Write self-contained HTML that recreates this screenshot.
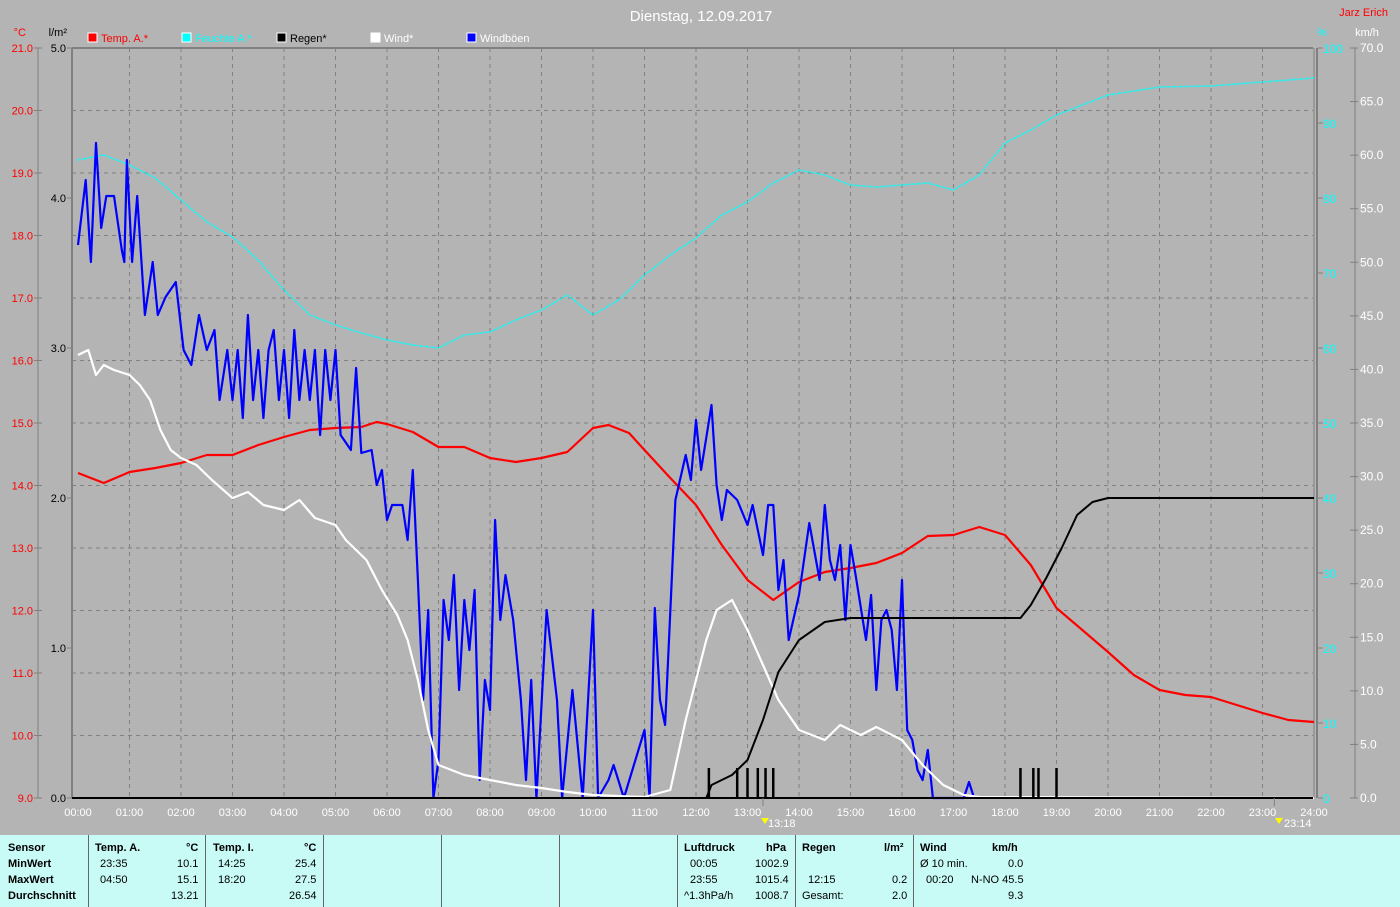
<!DOCTYPE html>
<html><head><meta charset="utf-8"><style>
html,body{margin:0;padding:0;background:#b4b4b4;}
body{width:1400px;height:907px;overflow:hidden;position:relative;font-family:"Liberation Sans",sans-serif;}
svg{position:absolute;left:0;top:0;}
.tb{position:absolute;left:0;top:835px;width:1400px;height:72px;background:#c8faf6;font-size:11px;color:#000;}
.c{position:absolute;top:0;height:72px;border-left:1px solid #666;}
.t{position:absolute;white-space:nowrap;}
.b{font-weight:bold;}
</style></head><body>
<svg id="s" width="1400" height="835" font-family="Liberation Sans, sans-serif" font-size="11"></svg>
<div class="tb">
<div class="c" style="left:88px"></div><div class="c" style="left:205px"></div><div class="c" style="left:323px"></div><div class="c" style="left:441px"></div><div class="c" style="left:559px"></div><div class="c" style="left:677px"></div><div class="c" style="left:795px"></div><div class="c" style="left:913px"></div>
<div class="t b" style="left:8px;top:7px">Sensor</div><div class="t b" style="left:8px;top:23px">MinWert</div><div class="t b" style="left:8px;top:39px">MaxWert</div><div class="t b" style="left:8px;top:55px">Durchschnitt</div>
<div class="t b" style="left:95px;top:7px">Temp. A.</div><div class="t b" style="left:186px;top:7px">°C</div>
<div class="t" style="left:100px;top:23px">23:35</div><div class="t" style="left:177px;top:23px">10.1</div>
<div class="t" style="left:100px;top:39px">04:50</div><div class="t" style="left:177px;top:39px">15.1</div>
<div class="t" style="left:171px;top:55px">13.21</div>
<div class="t b" style="left:213px;top:7px">Temp. I.</div><div class="t b" style="left:304px;top:7px">°C</div>
<div class="t" style="left:218px;top:23px">14:25</div><div class="t" style="left:295px;top:23px">25.4</div>
<div class="t" style="left:218px;top:39px">18:20</div><div class="t" style="left:295px;top:39px">27.5</div>
<div class="t" style="left:289px;top:55px">26.54</div>
<div class="t b" style="left:684px;top:7px">Luftdruck</div><div class="t b" style="left:766px;top:7px">hPa</div>
<div class="t" style="left:690px;top:23px">00:05</div><div class="t" style="left:755px;top:23px">1002.9</div>
<div class="t" style="left:690px;top:39px">23:55</div><div class="t" style="left:755px;top:39px">1015.4</div>
<div class="t" style="left:684px;top:55px">^1.3hPa/h</div><div class="t" style="left:755px;top:55px">1008.7</div>
<div class="t b" style="left:802px;top:7px">Regen</div><div class="t b" style="left:884px;top:7px">l/m²</div>
<div class="t" style="left:808px;top:39px">12:15</div><div class="t" style="left:892px;top:39px">0.2</div>
<div class="t" style="left:802px;top:55px">Gesamt:</div><div class="t" style="left:892px;top:55px">2.0</div>
<div class="t b" style="left:920px;top:7px">Wind</div><div class="t b" style="left:992px;top:7px">km/h</div>
<div class="t" style="left:920px;top:23px">Ø 10 min.</div><div class="t" style="left:1008px;top:23px">0.0</div>
<div class="t" style="left:926px;top:39px">00:20</div><div class="t" style="left:971px;top:39px">N-NO 45.5</div>
<div class="t" style="left:1008px;top:55px">9.3</div>
</div>
<script>
var s=document.getElementById('s'),h='';
function X(t){return 78+51.5*t;}
function L(x1,y1,x2,y2,c,w,d){h+='<line x1="'+x1+'" y1="'+y1+'" x2="'+x2+'" y2="'+y2+'" stroke="'+c+'" stroke-width="'+(w||1)+'"'+(d?' stroke-dasharray="'+d+'"':'')+'/>';}
function T(x,y,t,c,a,fs){h+='<text x="'+x+'" y="'+y+'" fill="'+c+'" text-anchor="'+(a||'start')+'"'+(fs?' font-size="'+fs+'"':'')+'>'+t+'</text>';}
function P(a,c,w,d){var p=[];for(var i=0;i<a.length;i+=2)p.push(X(a[i]).toFixed(1)+','+a[i+1]);h+='<polyline points="'+p.join(' ')+'" fill="none" stroke="'+c+'" stroke-width="'+w+'" stroke-linejoin="round"'+(d?' stroke-dasharray="'+d+'"':'')+'/>';}
for(var i=1;i<12;i++){var y=48+62.5*i;L(72,y,1313,y,'#808080',1,'4,4');}
for(var i=1;i<24;i++){L(X(i),48,X(i),798,'#808080',1,'4,4');}
L(72,48,1313,48,'#808080',2);L(72,48,72,798,'#808080',2);
L(1314,48,1314,798,'#808080',1);L(1317,48,1317,798,'#808080',2);
L(38,48,38,798,'#808080',1);L(1355,48,1355,798,'#808080',1);
for(var i=0;i<=12;i++){var y=48+62.5*i;L(34,y,42,y,'#808080');T(33,y+4,(21-i).toFixed(1),'#f00','end');}
for(var i=0;i<=5;i++){var y=48+150*i;L(67,y,72,y,'#808080');T(66,y+4,(5-i).toFixed(1),'#000','end');}
for(var i=0;i<=10;i++){var y=48+75*i;L(1318,y,1323,y,'#808080');T(1323,y+5,100-10*i,'#0ff','start',12);}
for(var i=0;i<=14;i++){var y=48+750/14*i;L(1350,y,1358,y,'#808080');T(1360,y+4,(70-5*i).toFixed(1),'#fff','start',12);}
T(26,36,'°C','#f00','end');T(67,36,'l/m²','#000','end');T(1322,36,'%','#0ff','middle');T(1367,36,'km/h','#fff','middle');
T(701,21,'Dienstag, 12.09.2017','#fff','middle',15);T(1388,16,'Jarz Erich','#f00','end');
var lg=[[88,'#f00','Temp. A.*','#f00'],[182,'#0ff','Feuchte A.*','#0ff'],[277,'#000','Regen*','#000'],[371,'#fff','Wind*','#fff'],[467,'#00f','Windböen','#fff']];
lg.forEach(function(e){h+='<rect x="'+e[0]+'" y="33" width="9" height="9" fill="'+e[1]+'" stroke="#fff"/>';T(e[0]+13,42,e[2],e[3]);});
for(var i=0;i<=24;i++){T(X(i),816,(i<10?'0':'')+i+':00','#fff','middle');}
P([0,160,0.5,155,1,165,1.5,178,2,200,2.5,222,3,237,3.5,260,4,290,4.5,315,5,325,5.5,333,6,340,6.5,345,7,348,7.5,335,8,332,8.5,320,9,310,9.5,295,10,315,10.5,300,11,275,11.5,255,12,238,12.5,215,13,202,13.5,183,14,170,14.5,175,15,185,15.5,187,16,185,16.5,183,17,190,17.5,175,18,143,18.5,130,19,115,19.5,105,20,95,21,87,22,86,23,82,24,78],'#0ff',1.5,'2,1');
P([0,473,0.5,483,1,472,1.5,468,2,463,2.5,455,3,455,3.5,445,4,437,4.5,430,5,428,5.5,427,5.8,422,6,424,6.5,432,7,447,7.5,447,8,458,8.5,462,9,458,9.5,452,10,428,10.3,425,10.7,433,11,450,11.5,478,12,505,12.5,545,13,580,13.5,600,14,582,14.5,572,15,568,15.5,563,16,553,16.5,536,17,535,17.5,527,18,535,18.5,565,19,608,19.5,630,20,652,20.5,675,21,690,21.5,695,22,697,22.5,705,23,713,23.5,720,24,722],'#f00',2.2);
P([0,245,0.15,180,0.25,262,0.35,143,0.45,228,0.55,196,0.7,196,0.85,250,0.9,262,0.95,160,1.05,262,1.15,196,1.3,315,1.45,262,1.55,315,1.7,297,1.9,282,2.05,350,2.2,365,2.35,315,2.5,350,2.65,330,2.75,400,2.9,350,3.0,400,3.1,350,3.2,418,3.3,315,3.4,400,3.5,350,3.6,418,3.7,350,3.8,330,3.9,400,4.0,350,4.1,418,4.2,330,4.3,400,4.4,350,4.5,400,4.6,350,4.7,435,4.8,350,4.9,400,5.0,350,5.1,435,5.3,450,5.4,368,5.5,453,5.7,450,5.8,485,5.9,470,6.0,520,6.1,505,6.3,505,6.4,540,6.5,470,6.6,580,6.7,700,6.8,610,6.9,798,7.0,760,7.1,600,7.2,640,7.3,575,7.4,690,7.5,600,7.6,650,7.7,590,7.8,780,7.9,680,8.0,710,8.1,520,8.2,620,8.3,575,8.45,620,8.6,700,8.7,780,8.8,680,8.9,798,9.0,705,9.1,610,9.3,700,9.4,798,9.6,690,9.8,798,10.0,610,10.1,798,10.3,780,10.4,765,10.6,798,11.0,730,11.1,798,11.2,608,11.3,700,11.4,725,11.6,500,11.8,455,11.9,480,12.0,420,12.1,470,12.3,405,12.4,485,12.5,520,12.6,490,12.8,500,13.0,525,13.1,505,13.3,555,13.4,505,13.5,505,13.6,590,13.7,560,13.8,640,14.0,595,14.2,523,14.4,580,14.5,505,14.6,560,14.7,580,14.8,545,14.9,620,15.0,545,15.1,575,15.3,640,15.4,595,15.5,690,15.6,620,15.7,610,15.8,630,15.9,690,16.0,580,16.1,730,16.2,740,16.3,770,16.4,780,16.5,750,16.6,798,17.2,798,17.3,782,17.4,798],'#00f',2.2);
P([0,355,0.2,350,0.35,375,0.5,365,0.7,370,1,375,1.2,385,1.4,400,1.6,430,1.8,450,2,458,2.3,465,2.6,480,3,498,3.3,492,3.6,505,4,510,4.3,500,4.6,518,5,525,5.2,540,5.6,560,5.9,590,6.2,615,6.4,640,6.6,680,6.8,730,7,765,7.5,775,8,780,8.5,785,9,788,9.5,792,10,795,11,797,11.5,790,11.8,720,12,680,12.2,640,12.4,610,12.7,600,13,630,13.3,665,13.6,700,14,730,14.5,740,14.8,725,15.2,735,15.5,727,16,740,16.4,765,16.8,785,17.2,795,17.5,797,24,798],'#fff',2.2);
L(72,798,1313,798,'#000',2);
P([0,798,12.2,798,12.3,785,12.7,775,13.0,760,13.3,720,13.6,672,14,640,14.5,622,15,618,18.3,618,18.5,605,18.8,578,19.1,548,19.4,515,19.7,502,20,498,24,498],'#000',2);
[12.25,12.8,13,13.2,13.35,13.5,18.3,18.55,18.65,19.0].forEach(function(t){L(X(t),768,X(t),798,'#000',2.5);});
L(X(13.3),798,X(13.3),806,'#808080');L(X(23.23),798,X(23.23),806,'#808080');
h+='<path d="M761 818 l4 6 l4 -6 z" fill="#ff0"/>';T(768,827,'13:18','#fff');
h+='<path d="M1275 818 l4 6 l4 -6 z" fill="#ff0"/>';T(1284,827,'23:14','#fff');
s.innerHTML=h;
</script>
</body></html>
